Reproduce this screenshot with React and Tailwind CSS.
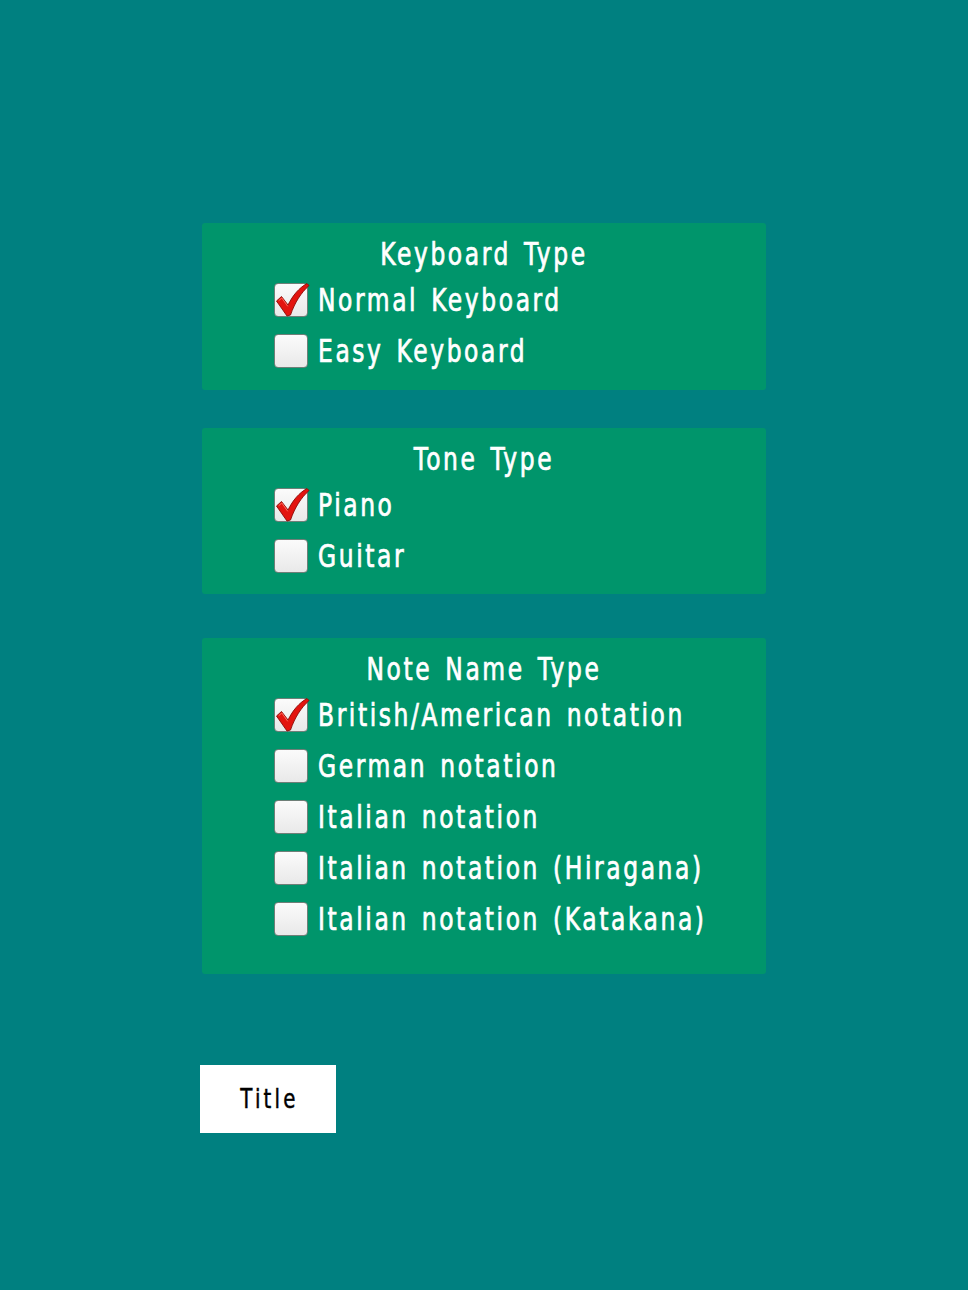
import React from "react";

function CheckBox({ checked }) {
  return (
    <div className="relative w-[34px] h-[34px] shrink-0 rounded-[4px] border border-[#6f7f78] bg-gradient-to-b from-[#fbfbfb] to-[#e9e9e9]">
      {checked && (
        <svg
          className="absolute left-[-1px] top-[-3px]"
          width="36"
          height="38"
          viewBox="0 0 36 38"
        >
          <path
            d="M2.5 20 L7.5 15.5 L14 24 C19 14 25 7 33 2.5 L35 4.5 C27 12 21 21 16.5 34 L13 35 Z"
            fill="#e3140f"
            stroke="#8a0b07"
            strokeWidth="0.9"
            strokeLinejoin="round"
          />
          <path
            d="M5 19.5 L7.8 17 L13.5 25"
            fill="none"
            stroke="#ff6a5c"
            strokeWidth="1"
            strokeLinecap="round"
          />
        </svg>
      )}
    </div>
  );
}

// Tall, narrow lettering: condensed face stretched vertically.
function Label({ children, className = "" }) {
  return (
    <span className={`inline-block origin-center scale-y-[1.22] whitespace-pre ${className}`}>
      {children}
    </span>
  );
}

function Row({ label, checked }) {
  return (
    <div className="flex items-center h-[51px] pl-[72px] gap-[10px]">
      <CheckBox checked={checked} />
      <Label className="text-white text-[26px] leading-none tracking-[2.6px] [word-spacing:3px] [-webkit-text-stroke:0.6px_white]">
        {label}
      </Label>
    </div>
  );
}

function Panel({ title, items, className = "" }) {
  return (
    <section className={`w-[564px] rounded-[3px] bg-[#00956b] pt-[11px] ${className}`}>
      <div className="h-[40px] flex items-center justify-center text-white text-[26px] leading-none tracking-[2.6px] [word-spacing:3px] [-webkit-text-stroke:0.6px_white]">
        <Label>{title}</Label>
      </div>
      {items.map((it) => (
        <Row key={it.label} label={it.label} checked={it.checked} />
      ))}
    </section>
  );
}

export default function App() {
  return (
    <div className="w-[968px] h-[1290px] bg-[#008080] overflow-hidden font-['DejaVu_Sans',sans-serif] [font-stretch:condensed]">
      <div className="pl-[202px] pt-[223px] flex flex-col">
        <Panel
          title="Keyboard Type"
          className="h-[167px]"
          items={[
            { label: "Normal Keyboard", checked: true },
            { label: "Easy Keyboard", checked: false },
          ]}
        />
        <Panel
          title="Tone Type"
          className="h-[166px] mt-[38px]"
          items={[
            { label: "Piano", checked: true },
            { label: "Guitar", checked: false },
          ]}
        />
        <Panel
          title="Note Name Type"
          className="h-[336px] mt-[44px]"
          items={[
            { label: "British/American notation", checked: true },
            { label: "German notation", checked: false },
            { label: "Italian notation", checked: false },
            { label: "Italian notation (Hiragana)", checked: false },
            { label: "Italian notation (Katakana)", checked: false },
          ]}
        />
        <button className="ml-[-2px] mt-[91px] w-[136px] h-[68px] bg-white flex items-center justify-center text-black text-[22px] leading-none tracking-[3.2px] [-webkit-text-stroke:0.4px_black]">
          <Label className="pl-[3px]">Title</Label>
        </button>
      </div>
    </div>
  );
}
